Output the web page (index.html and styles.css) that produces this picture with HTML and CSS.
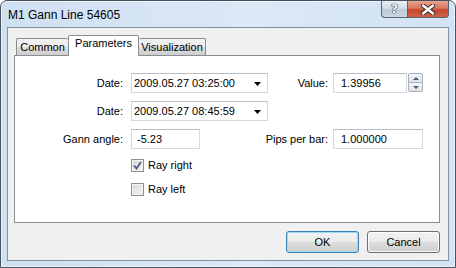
FILE: index.html
```html
<!DOCTYPE html>
<html lang="en">
<head>
<meta charset="UTF-8">
<title>M1 Gann Line 54605</title>
<link rel="stylesheet" href="styles.css">
</head>
<body>
<div class="window">
    <div class="titlebar">
        <span class="title">M1 Gann Line 54605</span>
        <div class="caption-buttons">
            <span class="cap-btn help">?</span>
            <span class="cap-btn close">
                <svg width="16" height="11" viewBox="0 0 16 11">
                    <path d="M3 1.5 L13 9.5 M13 1.5 L3 9.5" stroke="#3d2a26" stroke-width="4.4" stroke-linecap="round"/>
                    <path d="M3 1.5 L13 9.5 M13 1.5 L3 9.5" stroke="#ffffff" stroke-width="2.4" stroke-linecap="round"/>
                </svg>
            </span>
        </div>
    </div>
    <div class="client">
        <div class="tabs">
            <div class="tab tab-common">Common</div>
            <div class="tab tab-params active">Parameters</div>
            <div class="tab tab-vis">Visualization</div>
        </div>
        <div class="panel">
            <div class="form">
                <label class="label">Date:</label>
                <div class="picker">
                    <span>2009.05.27 03:25:00</span>
                    <svg width="7" height="4" viewBox="0 0 7 4"><polygon points="0,0 7,0 3.5,4" fill="#000"/></svg>
                </div>
                <label class="label label-right">Value:</label>
                <div class="spin-field">
                    <div class="input value-input">1.39956</div>
                    <div class="spinner">
                        <span class="spin up"><i></i></span>
                        <span class="spin down"><i></i></span>
                    </div>
                </div>

                <label class="label">Date:</label>
                <div class="picker">
                    <span>2009.05.27 08:45:59</span>
                    <svg width="7" height="4" viewBox="0 0 7 4"><polygon points="0,0 7,0 3.5,4" fill="#000"/></svg>
                </div>
                <span></span>
                <span></span>

                <label class="label">Gann angle:</label>
                <div class="input angle-input">-5.23</div>
                <label class="label label-right">Pips per bar:</label>
                <div class="input pips-input">1.000000</div>

                <div class="check-row">
                    <span class="checkbox">
                        <svg width="9" height="9" viewBox="0 0 9 9"><path d="M1 4.5 L3.5 7.5 L8 1" fill="none" stroke="#4a5d86" stroke-width="1.8"/></svg>
                    </span>
                    <span>Ray right</span>
                </div>
                <div class="check-row">
                    <span class="checkbox"></span>
                    <span>Ray left</span>
                </div>
            </div>
        </div>
        <div class="buttons">
            <button class="btn default">OK</button>
            <button class="btn">Cancel</button>
        </div>
    </div>
</div>
</body>
</html>
```

FILE: styles.css
```css
body {
    margin: 0;
    padding: 0;
    font-family: "Liberation Sans", Arial, sans-serif;
    font-size: 11px;
    color: #000;
    background: #fff;
}
.window {
    width: 456px;
    height: 268px;
    box-sizing: border-box;
    border: 1px solid #48525f;
    border-radius: 7px 7px 0 0;
    background: linear-gradient(to right, #cfe0f3, #dbe8f6 55%, #d2e3f5);
    box-shadow: inset 0 0 0 1px rgba(255, 255, 255, 0.55);
    display: flex;
    flex-direction: column;
    overflow: hidden;
}
.titlebar {
    height: 26px;
    display: flex;
    justify-content: space-between;
    align-items: flex-start;
    padding: 0 6px 0 7px;
}
.title {
    padding-top: 6px;
    line-height: 16px;
    font-size: 12px;
    color: #000;
}
.caption-buttons {
    display: flex;
    height: 17px;
}
.cap-btn {
    box-sizing: border-box;
    height: 17px;
    display: flex;
    align-items: center;
    justify-content: center;
    border: 1px solid #59626f;
    border-top: none;
}
.help {
    width: 26px;
    border-right: none;
    border-radius: 0 0 0 4px;
    background: linear-gradient(#e9eff5, #d3dde8 45%, #bccbda 55%, #c9d6e3);
    color: #f4f7fa;
    font-family: "DejaVu Sans", sans-serif;
    font-size: 12px;
    font-weight: bold;
    text-shadow: 0 0 1px #2c3542, 0 0 1px #2c3542, 0 0 1px #2c3542;
}
.close {
    width: 42px;
    border-radius: 0 0 4px 0;
    background: linear-gradient(#eaa493, #d9775f 45%, #c4452d 55%, #d2624a);
}
.client {
    flex: 1;
    margin: 0 6px 6px 6px;
    border: 1px solid #8592a2;
    background: #f0f0f0;
    padding: 7px 8px 7px 6px;
    display: flex;
    flex-direction: column;
}
.tabs {
    display: flex;
    align-items: flex-end;
    height: 21px;
    margin-bottom: -1px;
    padding-left: 2px;
    position: relative;
    z-index: 1;
}
.tab {
    box-sizing: border-box;
    height: 17px;
    margin-bottom: 1px;
    border: 1px solid #898c95;
    border-bottom: none;
    border-radius: 2px 2px 0 0;
    background: linear-gradient(#f2f2f2, #ebebeb 50%, #dddddd 50%, #cfcfcf);
    text-align: center;
    line-height: 17px;
}
.tab-common {
    width: 52px;
    border-right: none;
}
.tab-params {
    width: 71px;
}
.tab-vis {
    width: 67px;
    border-left: none;
}
.tab.active {
    height: 21px;
    margin-bottom: 0;
    background: #fff;
    line-height: 15px;
    padding-bottom: 4px;
}
.panel {
    height: 168px;
    box-sizing: border-box;
    border: 1px solid #898c95;
    background: #fff;
    padding-top: 17px;
}
.form {
    display: grid;
    grid-template-columns: 116px 137px 65px 90px;
    grid-template-rows: 20px 20px 20px 16px 16px;
    row-gap: 8px;
}
.label {
    justify-self: end;
    white-space: nowrap;
    padding-right: 8px;
    line-height: 20px;
}
.label-right {
    padding-right: 5px;
}
.input,
.picker {
    box-sizing: border-box;
    height: 20px;
    border: 1px solid #d5d9df;
    border-top-color: #b9bec6;
    background: #fff;
    line-height: 18px;
}
.picker {
    display: flex;
    justify-content: space-between;
    align-items: center;
    padding: 0 6px 0 2px;
}
.picker svg {
    margin-top: 1px;
}
.angle-input {
    width: 69px;
    padding-left: 5px;
}
.value-input {
    width: 74px;
    padding-left: 7px;
}
.pips-input {
    width: 90px;
    padding-left: 7px;
}
.spin-field {
    display: flex;
    gap: 1px;
}
.spinner {
    display: flex;
    flex-direction: column;
    width: 15px;
    height: 19px;
}
.spin {
    box-sizing: border-box;
    flex: 1;
    border: 1px solid #a9b0b9;
    background: linear-gradient(#f6f7f9, #dfe3e8);
    display: flex;
    align-items: center;
    justify-content: center;
}
.spin.up {
    border-radius: 2px 2px 0 0;
}
.spin.down {
    border-top: none;
    border-radius: 0 0 2px 2px;
}
.spin i {
    width: 0;
    height: 0;
    border-left: 3px solid transparent;
    border-right: 3px solid transparent;
}
.spin.up i {
    border-bottom: 3px solid #4a5d7c;
}
.spin.down i {
    border-top: 3px solid #4a5d7c;
}
.check-row {
    grid-column: 2 / 5;
    height: 16px;
    display: flex;
    align-items: center;
    gap: 4px;
}
.checkbox {
    box-sizing: border-box;
    width: 13px;
    height: 13px;
    border: 1px solid #8e8f8f;
    background: linear-gradient(135deg, #d6d6d6, #f6f6f6);
    box-shadow: inset 0 0 0 1px #f4f4f4;
    display: flex;
    align-items: center;
    justify-content: center;
}
.buttons {
    display: flex;
    justify-content: flex-end;
    gap: 8px;
    margin-top: 8px;
}
.btn {
    width: 73px;
    height: 22px;
    border: 1px solid #707070;
    border-radius: 3px;
    background: linear-gradient(#f2f2f2, #ebebeb 50%, #dddddd 50%, #cfcfcf);
    box-shadow: inset 0 0 0 1px rgba(255, 255, 255, 0.8);
    font-family: "Liberation Sans", Arial, sans-serif;
    font-size: 11px;
    color: #000;
    padding: 0;
}
.btn.default {
    border-color: #3c7fb1;
    box-shadow: inset 0 0 0 1px #9fdcf7;
}
```
